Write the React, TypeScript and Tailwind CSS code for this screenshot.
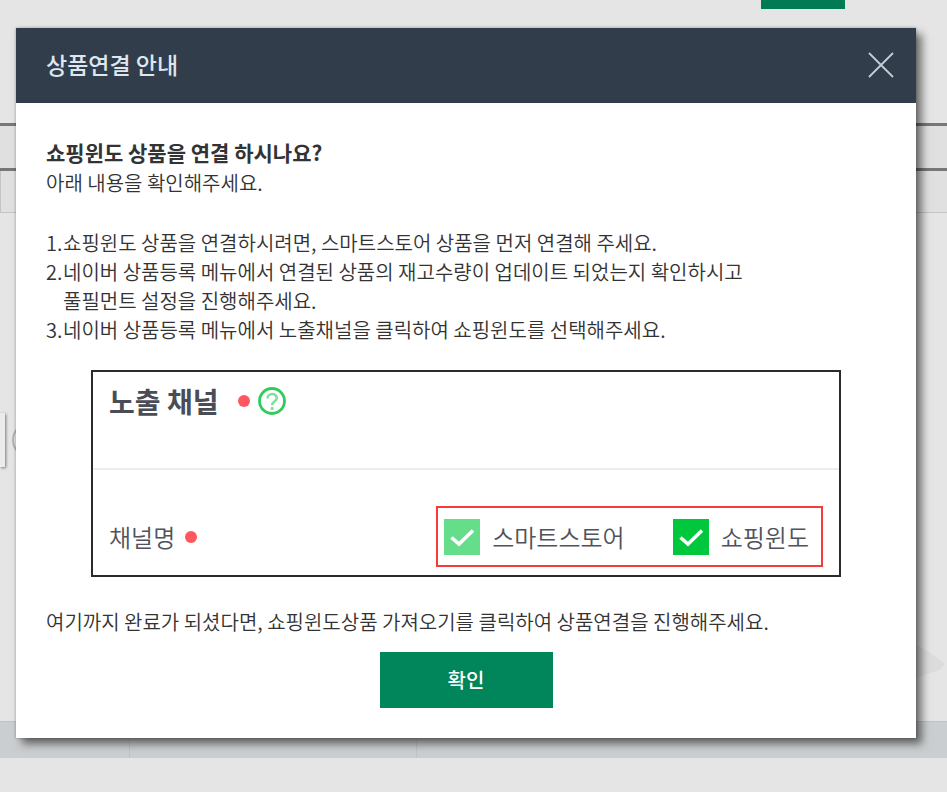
import React, { useState } from 'react'

interface Step {
  no: number
  lines: string[]
}

interface Channel {
  id: string
  label: string
  locked?: boolean
}

const steps: Step[] = [
  { no: 1, lines: ['쇼핑윈도 상품을 연결하시려면, 스마트스토어 상품을 먼저 연결해 주세요.'] },
  {
    no: 2,
    lines: ['네이버 상품등록 메뉴에서 연결된 상품의 재고수량이 업데이트 되었는지 확인하시고', '풀필먼트 설정을 진행해주세요.']
  },
  { no: 3, lines: ['네이버 상품등록 메뉴에서 노출채널을 클릭하여 쇼핑윈도를 선택해주세요.'] }
]

const channels: Channel[] = [
  { id: 'smartstore', label: '스마트스토어', locked: true },
  { id: 'window', label: '쇼핑윈도' }
]

function RequiredDot() {
  return <span className="h-3 w-3 shrink-0 rounded-full bg-[#ff5660]" />
}

function ChannelCheckbox({ channel }: { channel: Channel }) {
  const [checked, setChecked] = useState(true)

  return (
    <label htmlFor={channel.id} className="flex items-center gap-3">
      <span className="relative flex h-9 w-9 shrink-0">
        <input
          id={channel.id}
          type="checkbox"
          checked={checked}
          disabled={channel.locked}
          onChange={(e) => setChecked(e.target.checked)}
          className="h-9 w-9 appearance-none border border-[#00c73c] checked:bg-[#00c73c] disabled:border-[#66dd8a] disabled:bg-[#66dd8a]"
        />
        {checked && (
          <svg viewBox="0 0 36 36" fill="none" stroke="#fff" strokeWidth="3.6" className="pointer-events-none absolute inset-0">
            <path d="M7.5 18.5 L15 25 L29 11.5" />
          </svg>
        )}
      </span>
      <span className="text-2xl font-[350] text-[#50535b]">{channel.label}</span>
    </label>
  )
}

// Exposure channel form, as it appears in the product registration menu
function ChannelPreview() {
  return (
    <section className="mx-[45px] mt-[26px] border-2 border-[#2b2b2e] bg-white">
      <div className="flex h-[98px] items-start border-b-2 border-[#ebedf0] px-4 pt-3">
        <h3 className="text-[28px] leading-[34px] font-bold text-[#4a4d55]">노출 채널</h3>
        <div className="ml-5 flex h-[34px] items-center gap-2">
          <RequiredDot />
          <svg viewBox="0 0 28 28" fill="none" className="h-7 w-7">
            <circle cx="14" cy="14" r="12.5" stroke="#2fcb5c" strokeWidth="2.8" />
            <path d="M9.5 11.5 C9.5 5.5 18.8 5.5 18.8 11 C18.8 14.5 14.2 14 14.2 18.2" stroke="#7fe09a" strokeWidth="2.6" />
            <circle cx="14.2" cy="21.4" r="1.6" fill="#7fe09a" />
          </svg>
        </div>
      </div>
      <div className="flex items-center justify-between pt-9 pr-4 pb-2 pl-4">
        <div className="flex items-center gap-[10px]">
          <span className="text-2xl font-[350] text-[#50535b]">채널명</span>
          <RequiredDot />
        </div>
        <div className="flex h-[61px] items-center gap-12 border-2 border-[#f63b3b] pr-3 pl-[6px]">
          {channels.map((channel) => (
            <ChannelCheckbox key={channel.id} channel={channel} />
          ))}
        </div>
      </div>
    </section>
  )
}

function Backdrop() {
  return (
    <div aria-hidden="true" className="flex min-h-screen flex-col bg-[#e5e5e5]">
      <div className="flex justify-end pr-[102px]">
        <div className="h-[9px] w-[84px] bg-[#007b53]" />
      </div>
      <div className="mt-[114px] h-12 border-y-3 border-[#777] bg-[#e0e0e0]" />
      <div className="h-[42px] border-b border-l border-[#c4c4c4] bg-[#e0e0e0]" />
      <div className="flex grow items-center justify-between">
        <div className="mb-[54px] flex items-center gap-[7px] overflow-hidden py-1">
          <div className="h-[54px] w-[5px] bg-[#ececec] shadow-[1px_1px_3px_#777]" />
          <div className="h-9 w-9 rounded-full border-2 border-[#b5b5b5]" />
        </div>
        <svg viewBox="0 0 32 36" className="mt-[390px] h-9 w-8" fill="#dcdcdc">
          <path d="M0 0 L14 8 L30 20 L24 26 L0 34 Z" />
        </svg>
      </div>
      <div className="flex h-[37px] border-t border-[#bfc2c4] bg-[#cbced0]">
        <div className="w-[130px] border-r border-[#c0c3c5]" />
        <div className="w-[287px] border-r border-[#c0c3c5]" />
      </div>
      <div className="h-[34px]" />
    </div>
  )
}

export default function App() {
  const [open, setOpen] = useState(true)

  return (
    <div className="relative font-['Noto_Sans_CJK_KR',sans-serif] text-[#333]">
      <Backdrop />

      {open && (
        <div className="absolute inset-0 pt-7 pr-[31px] pl-4">
          <div role="dialog" aria-labelledby="guide-title" className="bg-white shadow-[6px_6px_8px_rgba(0,0,0,0.5),0_0_3px_rgba(0,0,0,0.3)]">
            <header className="flex h-[75px] items-center justify-between bg-[#323d4b] pr-[22px] pb-[2px] pl-[30px]">
              <h1 id="guide-title" className="text-[23px] font-medium text-[#dfe6ee]">상품연결 안내</h1>
              <button type="button" aria-label="닫기" onClick={() => setOpen(false)}>
                <svg viewBox="0 0 26 26" fill="none" stroke="#c5ccd6" strokeWidth="1.8" className="h-[26px] w-[26px]">
                  <path d="M1 1 L25 25 M25 1 L1 25" />
                </svg>
              </button>
            </header>

            <div className="px-[30px] pt-[34px] pb-[30px] text-xl font-[350]">
              <h2 className="text-[21px] leading-[30px] font-bold">쇼핑윈도 상품을 연결 하시나요?</h2>
              <p className="leading-8">아래 내용을 확인해주세요.</p>

              <ol className="mt-[29px] leading-[29px]">
                {steps.map((step) => (
                  <li key={step.no} className="flex">
                    <span className="w-[17px] shrink-0">{step.no}.</span>
                    <div>
                      {step.lines.map((line) => (
                        <p key={line}>{line}</p>
                      ))}
                    </div>
                  </li>
                ))}
              </ol>

              <ChannelPreview />

              <p className="mt-[30px] leading-[30px]">여기까지 완료가 되셨다면, 쇼핑윈도상품 가져오기를 클릭하여 상품연결을 진행해주세요.</p>
              <div className="mt-[15px] flex justify-center">
                <button type="button" onClick={() => setOpen(false)} className="h-14 w-[173px] bg-[#00865a] text-xl font-medium text-white">
                  확인
                </button>
              </div>
            </div>
          </div>
        </div>
      )}
    </div>
  )
}
